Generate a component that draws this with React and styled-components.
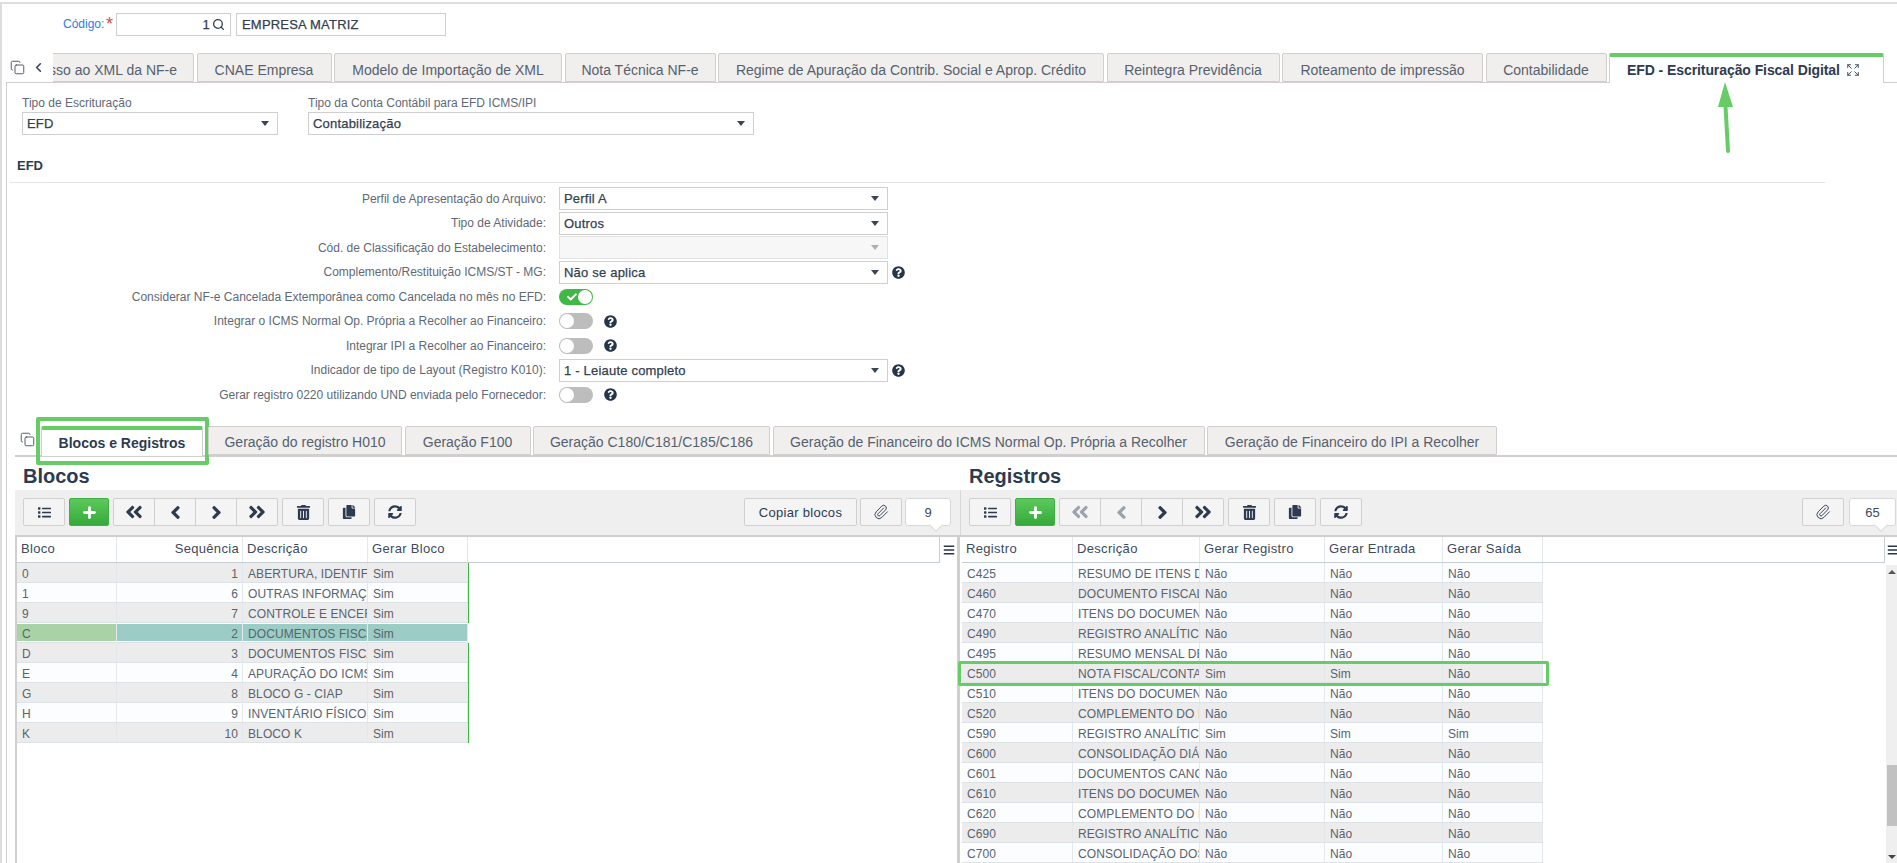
import React from "react";
import styled, { createGlobalStyle } from "styled-components";
import { Search, Copy, ChevronLeft, Expand, Plus, Paperclip } from "lucide-react";
import {
  FaAngleDoubleLeft,
  FaAngleDoubleRight,
  FaAngleLeft,
  FaAngleRight,
  FaBars,
  FaCheck,
  FaCopy,
  FaList,
  FaQuestionCircle,
  FaSyncAlt,
  FaTrashAlt,
} from "react-icons/fa";

const GREEN = "#66cc66";

const GlobalStyle = createGlobalStyle`
  html, body {
    margin: 0;
    padding: 0;
    background: #fff;
    overflow: hidden;
    font-family: "Liberation Sans", Arial, sans-serif;
  }
  * { box-sizing: border-box; }
`;

const Page = styled.div`
  height: 863px;
  overflow: hidden;
  margin-top: 2px;
  border-top: 2px solid #dedede;
  border-left: 2px solid #dcdcdc;
  display: flex;
  flex-direction: column;
`;

const CodeRow = styled.div`
  height: 49px;
  padding: 9px 0 0 61px;
  display: flex;
  align-items: flex-start;
`;

const CodeLabel = styled.label`
  font-size: 12px;
  color: #2b7de9;
  line-height: 23px;
  width: 43px;
`;

const Star = styled.span`
  color: #e04a3a;
  font-size: 18px;
  line-height: 23px;
  width: 10px;
`;

const TextBox = styled.div`
  height: 23px;
  width: ${(p) => p.$w}px;
  margin-right: ${(p) => p.$mr || 0}px;
  border: 1px solid #cfcfcf;
  display: flex;
  align-items: center;
  justify-content: ${(p) => (p.$end ? "flex-end" : "flex-start")};
  gap: 2px;
  padding: 0 5px;
  font-size: 13px;
  letter-spacing: 0.2px;
  font-weight: 500;
  color: #34404f;
  -webkit-text-stroke: 0.25px #34404f;
`;

const TabsBar = styled.div`
  position: relative;
  z-index: 1;
  height: 30px;
  margin-bottom: -1px;
  display: flex;
`;

const TabTools = styled.div`
  width: 51px;
  display: flex;
  align-items: flex-start;
  padding: 7px 0 0 8px;
  gap: 6px;
  color: #3b4655;
`;

const TabTrack = styled.div`
  width: 1831px;
  display: flex;
  justify-content: flex-end;
  gap: 2.5px;
  overflow: hidden;
`;

const Tab = styled.div`
  flex: none;
  height: ${(p) => p.$h || 29}px;
  width: ${(p) => p.$w}px;
  margin-right: ${(p) => p.$mr || 0}px;
  padding-top: ${(p) => (p.$active ? 0 : p.$pt || 2)}px;
  background: ${(p) => (p.$active ? "#fff" : "#f0efee")};
  border: 1px solid #d2cecd;
  border-bottom: ${(p) => (p.$active ? "none" : "1px solid #d2cecd")};
  border-top: ${(p) => (p.$active ? `4px solid ${GREEN}` : "1px solid #d2cecd")};
  border-radius: 2px 2px 0 0;
  display: flex;
  align-items: center;
  justify-content: center;
  gap: 6px;
  font-size: 14px;
  font-weight: ${(p) => (p.$active ? 700 : 400)};
  color: ${(p) => (p.$active ? "#2d3b50" : "#56616d")};
  white-space: nowrap;
  position: relative;
`;

const WideTab = styled(Tab)`
  justify-content: flex-start;
  padding-left: 17px;
  letter-spacing: -0.08px;
`;

const ClippedTab = styled(Tab)`
  justify-content: flex-end;
  padding-right: 16px;
`;

const Arrow = styled.svg`
  position: absolute;
  left: 1712px;
  top: 28px;
  width: 26px;
  height: 74px;
`;

const Panel = styled.div`
  flex: 1;
  min-height: 0;
  margin-left: 4px;
  border-top: 1px solid #d2cecd;
  border-left: 1px solid #d2cecd;
  display: flex;
  flex-direction: column;
`;

const TopFields = styled.div`
  padding: 13px 0 0 15px;
  display: flex;
  gap: 30px;
`;

const Field = styled.div`
  width: ${(p) => p.$w}px;
`;

const FieldLabel = styled.div`
  font-size: 12px;
  line-height: 14px;
  height: 16px;
  color: #5f6975;
`;

const SelectBox = styled.div`
  height: 23px;
  width: 100%;
  border: 1px solid ${(p) => (p.$disabled ? "#e2e2e2" : "#cfcfcf")};
  background: ${(p) => (p.$disabled ? "#f7f7f7" : "#fff")};
  display: flex;
  align-items: center;
  justify-content: space-between;
  padding: 0 8px 0 4px;
  font-size: 13px;
  letter-spacing: 0.2px;
  color: #34404f;
  -webkit-text-stroke: 0.25px #34404f;
`;

const Caret = styled.i`
  width: 0;
  height: 0;
  border-left: 4.5px solid transparent;
  border-right: 4.5px solid transparent;
  border-top: 5px solid ${(p) => (p.$disabled ? "#a9b0b8" : "#3b4655")};
`;

const SectionTitle = styled.div`
  margin: 24px 0 0 3px;
  width: 1815px;
  height: 24px;
  padding-left: 7px;
  font-size: 13px;
  font-weight: 700;
  line-height: 14px;
  color: #2d3b50;
  border-bottom: 1px solid #e4e4e4;
`;

const Form = styled.div`
  margin-top: 4px;
  display: flex;
  flex-direction: column;
  gap: 1.5px;
`;

const FormRow = styled.div`
  height: 23px;
  display: grid;
  grid-template-columns: 540px 329px auto;
  column-gap: 12px;
  align-items: center;
`;

const FormLabel = styled.div`
  text-align: right;
  padding-right: 1px;
  font-size: 12px;
  color: #5f6975;
  white-space: nowrap;
`;

const ControlCell = styled.div`
  display: flex;
  align-items: center;
  gap: 11px;
`;

const Help = styled(FaQuestionCircle)`
  color: #26364a;
  font-size: 13px;
  margin-left: ${(p) => p.$ml || 0}px;
`;

const Toggle = styled.div`
  width: 34px;
  height: 16px;
  border-radius: 8px;
  background: ${(p) => (p.$on ? "#3fb845" : "#bdbdbd")};
  display: flex;
  align-items: center;
  justify-content: ${(p) => (p.$on ? "flex-end" : "flex-start")};
  padding: 1px;
  position: relative;
  color: #fff;

  &::after {
    content: "";
    width: 14px;
    height: 14px;
    border-radius: 50%;
    background: #fff;
  }

  svg {
    position: absolute;
    left: 8px;
    top: 3px;
  }
`;

const SubTabsBar = styled.div`
  position: relative;
  margin: 20px 0 0 8px;
  height: 31px;
  padding-left: 5px;
  display: flex;
  gap: 2.5px;
  border-bottom: 2px solid #cfcfcf;
  color: #3b4655;
`;

const SubTabIcon = styled(Copy)`
  margin: 6px 3.5px 0 0;
  flex: none;
`;

const TabHighlight = styled.div`
  position: absolute;
  left: -6px;
  right: -7px;
  top: -13px;
  bottom: -9px;
  border: 4.5px solid ${GREEN};
  border-radius: 2px;
`;

const Split = styled.div`
  flex: 1;
  min-height: 0;
  display: grid;
  grid-template-columns: 953px 1fr;
`;

const Pane = styled.section`
  display: flex;
  flex-direction: column;
  min-width: 0;
  padding-left: ${(p) => p.$pl || 0}px;
`;

const PaneTitle = styled.h2`
  margin: 0;
  height: 33px;
  padding-left: ${(p) => p.$pl}px;
  font-size: 20px;
  line-height: 38px;
  font-weight: 700;
  color: #2d3b50;
`;

const Toolbar = styled.div`
  height: 45px;
  background: #efefef;
  padding: 8px ${(p) => (p.$divided ? 1 : 9)}px 0 8px;
  display: flex;
  gap: 4px;
  border-left: ${(p) => (p.$divided ? "1px solid #d8d8d8" : "none")};
`;

const ToolButton = styled.button`
  height: 28px;
  width: ${(p) => p.$w || 42}px;
  padding: 0;
  background: #f4f4f4;
  border: 1px solid #cfcfcf;
  border-radius: 2px;
  color: #2d3b50;
  font-family: inherit;
  font-size: 13px;
  letter-spacing: 0.3px;
  display: flex;
  align-items: center;
  justify-content: center;
`;

const AddButton = styled(ToolButton)`
  background: linear-gradient(#5cc95c, #36a93b);
  border-color: #3fae43;
  color: #fff;
`;

const NavGroup = styled.div`
  display: flex;
`;

const NavButton = styled(ToolButton)`
  width: 42px;
  border-radius: 0;
  margin-left: -1px;
  color: ${(p) => (p.disabled ? "#9aa3ad" : "#2d3b50")};

  &:first-child {
    margin-left: 0;
    border-radius: 2px 0 0 2px;
  }
  &:last-child {
    border-radius: 0 2px 2px 0;
  }
`;

const RightTools = styled.div`
  margin-left: auto;
  display: flex;
  gap: ${(p) => p.$gap}px;
`;

const Counter = styled.div`
  position: relative;
  height: 28px;
  width: ${(p) => p.$w}px;
  background: #fff;
  border: 1px solid #d8d8d8;
  border-radius: 3px;
  font-size: 13px;
  color: #3d4a5a;
  display: flex;
  align-items: center;
  justify-content: center;

  &::after {
    content: "";
    position: absolute;
    right: 9px;
    bottom: -5px;
    width: 9px;
    height: 9px;
    background: #fff;
    border-right: 1px solid #d8d8d8;
    border-bottom: 1px solid #d8d8d8;
    transform: rotate(45deg);
  }
`;

const GridWrap = styled.div`
  flex: 1;
  min-height: 0;
  display: flex;
  margin-left: ${(p) => p.$ml || 0}px;
  padding-left: ${(p) => p.$gap || 0}px;
  border-top: 2px solid #cfcfcf;
  border-left: ${(p) => p.$edge}px solid #cfcfcf;
`;

const GridBody = styled.div`
  flex: 1;
  min-width: 0;
`;

const HeaderRow = styled.div`
  height: 26px;
  display: grid;
  grid-template-columns: ${(p) => p.$cols};
  border-bottom: 1px solid #c5ced5;
  border-right: 1px solid #c5ced5;
`;

const HeaderCell = styled.div`
  padding: 0 ${(p) => (p.$right ? "3px" : "4px")};
  font-size: 13px;
  letter-spacing: 0.32px;
  line-height: 24px;
  color: #3d4a5a;
  text-align: ${(p) => (p.$right ? "right" : "left")};
  border-right: 1px solid #e3e8ec;
  white-space: nowrap;
  overflow: hidden;
`;

const Row = styled.div`
  position: relative;
  height: 20px;
  width: ${(p) => p.$width}px;
  display: grid;
  grid-template-columns: ${(p) => p.$cols};
  background: ${(p) => (p.$alt ? "#ececec" : "#fbfdfe")};
  border-bottom: 1px solid #dde2e6;
  box-shadow: ${(p) => (p.$marked ? `1px 0 0 #3fb845` : "none")};
`;

const Cell = styled.div`
  padding: 0 ${(p) => (p.$right ? "4px" : "5px")};
  font-size: 12px;
  letter-spacing: 0.1px;
  line-height: 22px;
  color: #59636e;
  text-align: ${(p) => (p.$right ? "right" : "left")};
  border-right: 1px solid #e3e8ec;
  background: ${(p) => p.$bg || "transparent"};
  box-shadow: ${(p) => (p.$bg ? "inset 0 1px 0 #fff, inset 0 -1px 0 #fff" : "none")};
  white-space: nowrap;
  overflow: hidden;
`;

const RowHighlight = styled.div`
  position: absolute;
  left: -4px;
  right: -6px;
  top: -2px;
  bottom: -4px;
  border: 3px solid ${GREEN};
  border-radius: 2px;
  z-index: 1;
`;

const GridSide = styled.div`
  flex: none;
  width: ${(p) => p.$w}px;
  display: flex;
  flex-direction: column;
  color: #26364a;
`;

const MenuSlot = styled.div`
  height: 26px;
  padding: 7px 0 0 ${(p) => p.$pl}px;
  font-size: 12px;
  line-height: 12px;
`;

const ScrollTrack = styled.div`
  margin: 2px 0 0 1px;
  background: #efefef;
  display: flex;
  flex-direction: column;
  align-items: center;
  padding-top: 5px;
  height: 298px;
`;

const ScrollUp = styled.i`
  width: 0;
  height: 0;
  border-left: 4px solid transparent;
  border-right: 4px solid transparent;
  border-bottom: 4px solid #555;
`;

const ScrollDown = styled.i`
  width: 0;
  height: 0;
  border-left: 4px solid transparent;
  border-right: 4px solid transparent;
  border-top: 4px solid #444;
`;

const ScrollThumb = styled.div`
  width: 10px;
  height: 61px;
  margin: 191px 0 29px 1px;
  background: #c1c1c1;
`;

const topTabs = [
  ["Regime de Apuração da Contrib. Social e Aprop. Crédito", 386],
  ["Reintegra Previdência", 173],
  ["Roteamento de impressão", 201],
  ["Contabilidade", 121],
];

const subTabs = [
  ["Geração do registro H010", 194],
  ["Geração F100", 126],
  ["Geração C180/C181/C185/C186", 237],
  ["Geração de Financeiro do ICMS Normal Op. Própria a Recolher", 432],
  ["Geração de Financeiro do IPI a Recolher", 290],
];

const blocos = [
  ["0", "1", "ABERTURA, IDENTIFICAÇÃO E CONTROLE"],
  ["1", "6", "OUTRAS INFORMAÇÕES"],
  ["9", "7", "CONTROLE E ENCERRAMENTO"],
  ["C", "2", "DOCUMENTOS FISCAIS I - MERCADORIAS"],
  ["D", "3", "DOCUMENTOS FISCAIS II - SERVIÇOS"],
  ["E", "4", "APURAÇÃO DO ICMS E DO IPI"],
  ["G", "8", "BLOCO G - CIAP"],
  ["H", "9", "INVENTÁRIO FÍSICO"],
  ["K", "10", "BLOCO K"],
];

const registros = [
  ["C425", "RESUMO DE ITENS DO DOCUMENTO", "Não", "Não", "Não"],
  ["C460", "DOCUMENTO FISCAL EMITIDO", "Não", "Não", "Não"],
  ["C470", "ITENS DO DOCUMENTO FISCAL", "Não", "Não", "Não"],
  ["C490", "REGISTRO ANALÍTICO DO MOVIMENTO", "Não", "Não", "Não"],
  ["C495", "RESUMO MENSAL DE ITENS", "Não", "Não", "Não"],
  ["C500", "NOTA FISCAL/CONTA DE ENERGIA", "Sim", "Sim", "Não"],
  ["C510", "ITENS DO DOCUMENTO", "Não", "Não", "Não"],
  ["C520", "COMPLEMENTO DO DOCUMENTO", "Não", "Não", "Não"],
  ["C590", "REGISTRO ANALÍTICO DO DOCUMENTO", "Sim", "Sim", "Sim"],
  ["C600", "CONSOLIDAÇÃO DIÁRIA DE NOTAS", "Não", "Não", "Não"],
  ["C601", "DOCUMENTOS CANCELADOS", "Não", "Não", "Não"],
  ["C610", "ITENS DO DOCUMENTO CONSOLIDADO", "Não", "Não", "Não"],
  ["C620", "COMPLEMENTO DO DOCUMENTO", "Não", "Não", "Não"],
  ["C690", "REGISTRO ANALÍTICO DOS DOCUMENTOS", "Não", "Não", "Não"],
  ["C700", "CONSOLIDAÇÃO DOS DOCUMENTOS", "Não", "Não", "Não"],
];

const BLOCOS_COLS = "100px 126px 125px 100px 1fr";
const BLOCOS_ROW_COLS = "100px 126px 125px 100px";
const REGISTROS_COLS = "111px 127px 125px 118px 100px 1fr";
const REGISTROS_ROW_COLS = "111px 127px 125px 118px 100px";

const NavButtons = ({ firstDisabled }) => (
  <NavGroup>
    <NavButton disabled={firstDisabled}><FaAngleDoubleLeft size={20} /></NavButton>
    <NavButton disabled={firstDisabled}><FaAngleLeft size={21} /></NavButton>
    <NavButton><FaAngleRight size={21} /></NavButton>
    <NavButton><FaAngleDoubleRight size={20} /></NavButton>
  </NavGroup>
);

const GridToolbar = ({ firstDisabled, divided, children }) => (
  <Toolbar $divided={divided}>
    <ToolButton><FaList size={13} /></ToolButton>
    <AddButton $w={40}><Plus size={17} strokeWidth={4} /></AddButton>
    <NavButtons firstDisabled={firstDisabled} />
    <ToolButton><FaTrashAlt size={15} /></ToolButton>
    <ToolButton><FaCopy size={14} /></ToolButton>
    <ToolButton><FaSyncAlt size={14} /></ToolButton>
    {children}
  </Toolbar>
);

const FormLine = ({ label, children }) => (
  <FormRow>
    <FormLabel>{label}</FormLabel>
    {children}
  </FormRow>
);

const App = () => {
  return (
    <>
      <GlobalStyle />
      <Page>
        <CodeRow>
          <CodeLabel>Código:</CodeLabel>
          <Star>*</Star>
          <TextBox $w={115} $mr={5} $end>
            1 <Search size={13} strokeWidth={2.4} />
          </TextBox>
          <TextBox $w={210}>EMPRESA MATRIZ</TextBox>
        </CodeRow>

        <TabsBar>
          <TabTools>
            <Copy size={15} strokeWidth={1.4} />
            <ChevronLeft size={15} strokeWidth={2.6} />
          </TabTools>
          <TabTrack>
            <ClippedTab $w={240} $pt={4}>Controle de Acesso ao XML da NF-e</ClippedTab>
            <Tab $w={135} $pt={4}>CNAE Empresa</Tab>
            <Tab $w={228} $pt={4}>Modelo de Importação de XML</Tab>
            <Tab $w={151} $pt={4}>Nota Técnica NF-e</Tab>
            {topTabs.map(([label, w]) => (
              <Tab key={label} $w={w} $pt={4}>{label}</Tab>
            ))}
            <WideTab $w={275} $h={30} $active>
              EFD - Escrituração Fiscal Digital<Expand size={14} strokeWidth={1.5} />
            </WideTab>
          </TabTrack>
          <Arrow viewBox="0 0 26 74">
            <polygon points="11,1 4,26 19,26" fill={GREEN} />
            <line x1="11.5" y1="25" x2="14" y2="70" stroke={GREEN} strokeWidth="4" strokeLinecap="round" />
          </Arrow>
        </TabsBar>

        <Panel>
          <TopFields>
            <Field $w={256}>
              <FieldLabel>Tipo de Escrituração</FieldLabel>
              <SelectBox>EFD<Caret /></SelectBox>
            </Field>
            <Field $w={446}>
              <FieldLabel>Tipo da Conta Contábil para EFD ICMS/IPI</FieldLabel>
              <SelectBox>Contabilização<Caret /></SelectBox>
            </Field>
          </TopFields>

          <SectionTitle>EFD</SectionTitle>

          <Form>
            <FormLine label="Perfil de Apresentação do Arquivo:">
              <SelectBox>Perfil A<Caret /></SelectBox>
            </FormLine>
            <FormLine label="Tipo de Atividade:">
              <SelectBox>Outros<Caret /></SelectBox>
            </FormLine>
            <FormLine label="Cód. de Classificação do Estabelecimento:">
              <SelectBox $disabled><span /><Caret $disabled /></SelectBox>
            </FormLine>
            <FormLine label="Complemento/Restituição ICMS/ST - MG:">
              <SelectBox>Não se aplica<Caret /></SelectBox>
              <Help $ml={-8} />
            </FormLine>
            <FormLine label="Considerar NF-e Cancelada Extemporânea como Cancelada no mês no EFD:">
              <ControlCell><Toggle $on><FaCheck size={10} /></Toggle></ControlCell>
            </FormLine>
            <FormLine label="Integrar o ICMS Normal Op. Própria a Recolher ao Financeiro:">
              <ControlCell><Toggle /><Help /></ControlCell>
            </FormLine>
            <FormLine label="Integrar IPI a Recolher ao Financeiro:">
              <ControlCell><Toggle /><Help /></ControlCell>
            </FormLine>
            <FormLine label="Indicador de tipo de Layout (Registro K010):">
              <SelectBox>1 - Leiaute completo<Caret /></SelectBox>
              <Help $ml={-8} />
            </FormLine>
            <FormLine label="Gerar registro 0220 utilizando UND enviada pelo Fornecedor:">
              <ControlCell><Toggle /><Help /></ControlCell>
            </FormLine>
          </Form>

          <SubTabsBar>
            <SubTabIcon size={15} strokeWidth={1.4} />
            <Tab $w={162} $h={30} $mr={2.5} $active>
              Blocos e Registros
              <TabHighlight />
            </Tab>
            {subTabs.map(([label, w]) => (
              <Tab key={label} $w={w} $pt={3}>{label}</Tab>
            ))}
          </SubTabsBar>

          <Split>
            <Pane $pl={8}>
              <PaneTitle $pl={8}>Blocos</PaneTitle>
              <GridToolbar firstDisabled={false}>
                <RightTools $gap={3}>
                  <ToolButton $w={113}>Copiar blocos</ToolButton>
                  <ToolButton><Paperclip size={16} strokeWidth={1.4} /></ToolButton>
                  <Counter $w={46}>9</Counter>
                </RightTools>
              </GridToolbar>
              <GridWrap $edge={2}>
                <GridBody>
                  <HeaderRow $cols={BLOCOS_COLS}>
                    <HeaderCell>Bloco</HeaderCell>
                    <HeaderCell $right>Sequência</HeaderCell>
                    <HeaderCell>Descrição</HeaderCell>
                    <HeaderCell>Gerar Bloco</HeaderCell>
                    <span />
                  </HeaderRow>
                  {blocos.map(([id, seq, desc], i) => {
                    const selected = id === "C";
                    const bg = selected ? "#9bccc5" : undefined;
                    return (
                      <Row key={id} $width={451} $cols={BLOCOS_ROW_COLS} $alt={i % 2 === 0} $marked={!selected}>
                        <Cell $bg={selected ? "#a9d3a6" : undefined}>{id}</Cell>
                        <Cell $right $bg={bg}>{seq}</Cell>
                        <Cell $bg={bg}>{desc}</Cell>
                        <Cell $bg={bg}>Sim</Cell>
                      </Row>
                    );
                  })}
                </GridBody>
                <GridSide $w={20}>
                  <MenuSlot $pl={3}><FaBars /></MenuSlot>
                </GridSide>
              </GridWrap>
            </Pane>

            <Pane>
              <PaneTitle $pl={9}>Registros</PaneTitle>
              <GridToolbar firstDisabled divided>
                <RightTools $gap={5}>
                  <ToolButton><Paperclip size={16} strokeWidth={1.4} /></ToolButton>
                  <Counter $w={47}>65</Counter>
                </RightTools>
              </GridToolbar>
              <GridWrap $edge={3} $ml={-3} $gap={2}>
                <GridBody>
                  <HeaderRow $cols={REGISTROS_COLS}>
                    <HeaderCell>Registro</HeaderCell>
                    <HeaderCell>Descrição</HeaderCell>
                    <HeaderCell>Gerar Registro</HeaderCell>
                    <HeaderCell>Gerar Entrada</HeaderCell>
                    <HeaderCell>Gerar Saída</HeaderCell>
                    <span />
                  </HeaderRow>
                  {registros.map(([id, desc, reg, ent, sai], i) => (
                    <Row key={id} $width={581} $cols={REGISTROS_ROW_COLS} $alt={i % 2 === 1}>
                      <Cell>{id}</Cell>
                      <Cell>{desc}</Cell>
                      <Cell>{reg}</Cell>
                      <Cell>{ent}</Cell>
                      <Cell>{sai}</Cell>
                      {id === "C500" && <RowHighlight />}
                    </Row>
                  ))}
                </GridBody>
                <GridSide $w={12}>
                  <MenuSlot $pl={2}><FaBars /></MenuSlot>
                  <ScrollTrack>
                    <ScrollUp />
                    <ScrollThumb />
                    <ScrollDown />
                  </ScrollTrack>
                </GridSide>
              </GridWrap>
            </Pane>
          </Split>
        </Panel>
      </Page>
    </>
  );
};

export default App;
